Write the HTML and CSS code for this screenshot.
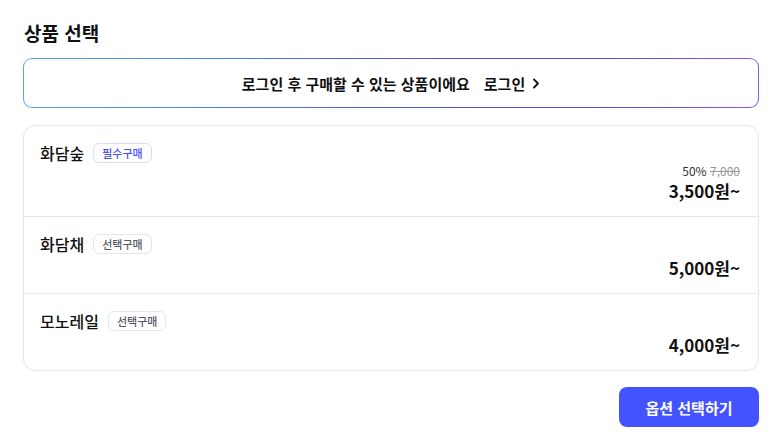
FILE: index.html
```html
<!DOCTYPE html>
<html lang="ko">
<head>
<meta charset="utf-8">
<link rel="stylesheet" href="styles.css">
</head>
<body>
<div class="page">
  <h2 class="title">상품 선택</h2>
  <div class="login-box">
    <span class="login-text">로그인 후 구매할 수 있는 상품이에요</span>
    <span class="login-link">로그인
      <svg class="chev" width="8" height="11" viewBox="0 0 8 11"><path d="M2 1.5 L6 5.5 L2 9.5" fill="none" stroke="#111" stroke-width="1.8" stroke-linecap="round" stroke-linejoin="round"/></svg>
    </span>
  </div>
  <div class="list">
    <div class="row">
      <div class="name-line"><span class="name">화담숲</span><span class="badge badge-req">필수구매</span></div>
      <div class="price-col">
        <div class="discount"><span class="rate">50%</span> <span class="orig">7,000</span></div>
        <div class="price">3,500원~</div>
      </div>
    </div>
    <div class="row">
      <div class="name-line"><span class="name">화담채</span><span class="badge badge-opt">선택구매</span></div>
      <div class="price-col">
        <div class="price">5,000원~</div>
      </div>
    </div>
    <div class="row">
      <div class="name-line"><span class="name">모노레일</span><span class="badge badge-opt">선택구매</span></div>
      <div class="price-col">
        <div class="price">4,000원~</div>
      </div>
    </div>
  </div>
  <div class="actions">
    <button class="btn">옵션 선택하기</button>
  </div>
</div>
</body>
</html>
```
FILE: styles.css
```css
* { box-sizing: border-box; }
html, body { margin: 0; padding: 0; background: #fff; }
body {
  font-family: "Noto Sans CJK KR", "Noto Sans", sans-serif;
  color: #111;
}
.page {
  padding: 20px 23px 0 23px;
}
.title {
  margin: 0 0 12px 1px;
  font-size: 19px;
  line-height: 26px;
  font-weight: 700;
  color: #111;
}
.login-box {
  height: 50px;
  border: 1px solid transparent;
  border-radius: 9px;
  background:
    linear-gradient(#fff, #fff) padding-box,
    linear-gradient(90deg, #4eaaf8 0%, #4c6ae6 40%, #5048e0 70%, #8c55e6 100%) border-box;
  display: flex;
  align-items: center;
  justify-content: center;
  gap: 14px;
  font-size: 15px;
  font-weight: 600;
  color: #111;
}
.login-link {
  display: inline-flex;
  align-items: center;
  gap: 7px;
}
.chev { display: block; }
.list {
  margin-top: 17px;
  border: 1px solid #e6e7ec;
  border-radius: 12px;
}
.row {
  padding: 16px 18px 12px 16px;
  border-top: 1px solid #e6e7ec;
}
.row:first-child { border-top: none; }
.name-line {
  display: flex;
  align-items: center;
  gap: 9px;
  height: 22px;
}
.name {
  font-size: 16px;
  font-weight: 500;
  color: #111;
}
.badge {
  display: inline-flex;
  align-items: center;
  height: 20px;
  padding: 0 8px;
  border-radius: 6px;
  font-size: 11px;
  font-weight: 500;
  border: 1px solid #e5e6ea;
}
.badge-req {
  color: #4a4ff5;
  border-color: #d9dbfb;
}
.badge-opt {
  color: #555a66;
}
.price-col {
  display: flex;
  flex-direction: column;
  align-items: flex-end;
}
.discount {
  font-size: 12px;
  line-height: 14px;
  color: #333;
}
.orig {
  color: #999;
  text-decoration: line-through;
}
.price {
  font-size: 17px;
  line-height: 26px;
  font-weight: 700;
  color: #111;
}
.actions {
  display: flex;
  justify-content: flex-end;
  margin-top: 16px;
}
.btn {
  width: 140px;
  height: 40px;
  border: none;
  border-radius: 8px;
  background: #4353ff;
  color: #fff;
  font-family: inherit;
  font-size: 15px;
  font-weight: 700;
}
```
